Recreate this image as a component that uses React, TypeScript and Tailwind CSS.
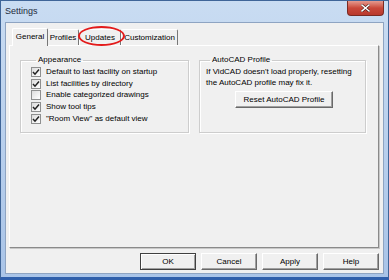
export default function App() {
    const rows = [
        { label: "Default to last facility on startup", checked: true },
        { label: "List facilities by directory", checked: true },
        { label: "Enable categorized drawings", checked: false },
        { label: "Show tool tips", checked: true },
        { label: "\"Room View\" as default view", checked: true },
    ];

    return (
        <div className="relative w-[389px] h-[280px] flex flex-col bg-gradient-to-b from-[#c9dcf2] to-[#a9c4e8] border border-[#3f6598] border-b-[3px] border-b-[#2f5fab] font-['Liberation_Sans',Arial,sans-serif] text-[8px] text-black leading-[10px] overflow-hidden">

            {/* TITLE BAR */}
            <div className="h-[21px] flex items-start shrink-0">
                <span className="pl-[4px] pt-[5px] text-[9px] leading-[11px] text-[#1e2b3c]">Settings</span>
                <div className="ml-auto mr-[4px] w-[37px] h-[15px] rounded-b-[4px] border border-t-0 border-[#7a2a22] bg-gradient-to-b from-[#e49a8f] via-[#c9483a] to-[#b8392d] flex items-center justify-center">
                    <svg width="9" height="8" viewBox="0 0 9 8">
                        <path d="M1 1 L8 7 M8 1 L1 7" stroke="#3a0f0a" strokeWidth="2.6" strokeLinecap="square" />
                        <path d="M1 1 L8 7 M8 1 L1 7" stroke="#ffffff" strokeWidth="1.5" strokeLinecap="square" />
                    </svg>
                </div>
            </div>

            {/* CLIENT */}
            <div className="flex-1 mx-[4px] mb-[3px] bg-[#f0f0f0] border border-[#8ea4c2] flex flex-col">

                {/* TABS */}
                <div className="flex items-end h-[22px] pl-[6px] mt-[0px] shrink-0">
                    <div className="relative z-10 w-[36px] h-[18px] -mb-px bg-[#f0f0f0] border-l border-t border-white border-r border-r-[#777] rounded-t-[2px] flex items-center justify-center pb-[1px]">
                        General
                    </div>
                    <div className="w-[31px] h-[16px] border-t border-white border-r border-r-[#777] rounded-t-[2px] flex items-center justify-center">
                        Profiles
                    </div>
                    <div className="w-[42px] h-[16px] border-l border-t border-white border-r border-r-[#777] rounded-t-[2px] flex items-center justify-center">
                        Updates
                    </div>
                    <div className="w-[57px] h-[16px] border-l border-t border-white border-r border-r-[#777] rounded-t-[2px] flex items-center justify-center">
                        Customization
                    </div>
                </div>

                {/* PANEL */}
                <div className="ml-[3px] mr-[4px] h-[203px] border border-l-white border-t-white border-r-[#8a8a8a] border-b-[#8a8a8a] shadow-[1px_1px_0_#c8c8c8] flex gap-[10px] pl-[10px] pt-[9px]">

                    <fieldset className="w-[169px] h-[78px] border border-[#cdcdcd] shadow-[inset_1px_1px_0_#ffffff,1px_1px_0_#ffffff] pl-[10px]">
                        <legend className="ml-[5px] px-[2px] leading-[10px]">Appearance</legend>
                        <div className="flex flex-col mt-[1px]">
                            {rows.map((r) => (
                                <div key={r.label} className="flex items-center h-[11.75px] gap-[5px]">
                                    <div className="w-[10px] h-[10px] border border-[#8e8f8f] bg-gradient-to-br from-[#dcdcdc] to-white flex items-center justify-center">
                                        {r.checked && (
                                            <svg width="8" height="8" viewBox="0 0 8 8">
                                                <path d="M1 4 L3 6.2 L7 1.5" fill="none" stroke="#222" strokeWidth="1.5" />
                                            </svg>
                                        )}
                                    </div>
                                    <span>{r.label}</span>
                                </div>
                            ))}
                        </div>
                    </fieldset>

                    <fieldset className="w-[167px] h-[78px] border border-[#cdcdcd] shadow-[inset_1px_1px_0_#ffffff,1px_1px_0_#ffffff] pl-[6px]">
                        <legend className="ml-[4px] px-[2px] leading-[10px]">AutoCAD Profile</legend>
                        <p className="mt-[1px] leading-[11px]">
                            If VidCAD doesn't load properly, resetting<br />
                            the AutoCAD profile may fix it.
                        </p>
                        <div className="flex mt-[3px] pl-[29px]">
                            <div className="w-[98px] h-[17px] border border-l-white border-t-white border-r-[#696969] border-b-[#696969] shadow-[inset_-1px_-1px_0_#a0a0a0] flex items-center justify-center">
                                Reset AutoCAD Profile
                            </div>
                        </div>
                    </fieldset>
                </div>

                {/* BUTTONS */}
                <div className="flex justify-end gap-[5px] mr-[4px] mt-[5px]">
                    <div className="w-[56px] h-[17px] border border-[#404040] shadow-[inset_1px_1px_0_#fff,inset_-1px_-1px_0_#a0a0a0] flex items-center justify-center">OK</div>
                    <div className="w-[56px] h-[17px] border border-l-white border-t-white border-r-[#696969] border-b-[#696969] shadow-[inset_-1px_-1px_0_#a0a0a0] flex items-center justify-center">Cancel</div>
                    <div className="w-[56px] h-[17px] border border-l-white border-t-white border-r-[#696969] border-b-[#696969] shadow-[inset_-1px_-1px_0_#a0a0a0] flex items-center justify-center">Apply</div>
                    <div className="w-[56px] h-[17px] border border-l-white border-t-white border-r-[#696969] border-b-[#696969] shadow-[inset_-1px_-1px_0_#a0a0a0] flex items-center justify-center">Help</div>
                </div>
            </div>

            {/* RED HIGHLIGHT */}
            <div className="absolute left-[77px] top-[25px] w-[47px] h-[20px] rounded-[50%] border-2 border-[#e31b1b]" />
        </div>
    );
}
